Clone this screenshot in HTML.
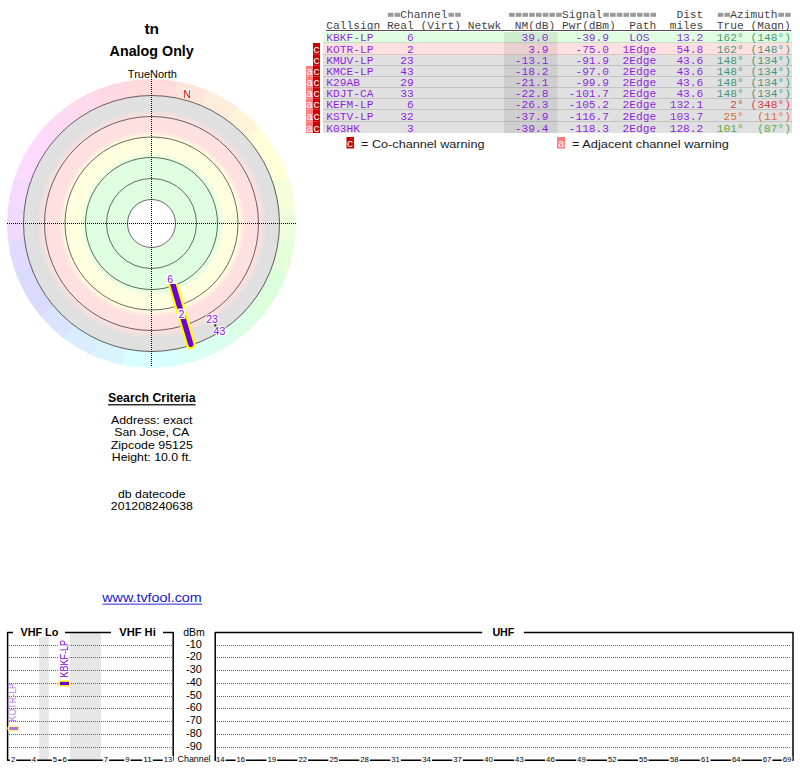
<!DOCTYPE html><html><head><meta charset="utf-8"><style>
html,body{margin:0;padding:0;background:#fff;}
body{width:800px;height:768px;position:relative;overflow:hidden;}
.abs{position:absolute;}
</style></head><body>
<div class="abs" style="left:7.0px;top:79.0px;width:289.0px;height:289.0px;border-radius:50%;background:conic-gradient(from 0deg at 50% 50%, #ffdada 0.00deg 10.25deg,#ffe4da 10.25deg 23.00deg,#ffecda 23.00deg 36.00deg,#fff4da 36.00deg 48.75deg,#ffffda 48.75deg 71.50deg,#f4ffda 71.50deg 84.25deg,#ecffda 84.25deg 97.25deg,#e4ffda 97.25deg 110.00deg,#daffda 110.00deg 130.25deg,#daffe4 130.25deg 143.00deg,#daffec 143.00deg 156.00deg,#dafff4 156.00deg 168.75deg,#daffff 168.75deg 191.50deg,#daf4ff 191.50deg 204.25deg,#daecff 204.25deg 217.25deg,#dae4ff 217.25deg 230.00deg,#dadaff 230.00deg 250.25deg,#e4daff 250.25deg 263.00deg,#ecdaff 263.00deg 276.00deg,#f4daff 276.00deg 288.75deg,#ffdaff 288.75deg 311.50deg,#ffdaf4 311.50deg 324.25deg,#ffdaec 324.25deg 337.25deg,#ffdae4 337.25deg 350.00deg,#ffdada 350.00deg 360.00deg);"></div>
<div class="abs" style="left:23.5px;top:95.5px;width:256px;height:256px;border-radius:50%;background:radial-gradient(circle 128px at 50% 50%, #fff 0px, #fff 24px, #e0ffe0 24px, #e0ffe0 66px, #ffffe0 72.5px, #ffffe0 86.5px, #ffe0e0 93px, #ffe0e0 107.5px, #e0e0e0 114.5px, #e0e0e0 128px);"></div>
<svg class="abs" style="left:0;top:0" width="800" height="768" viewBox="0 0 800 768">

<text x="151.7" y="34" text-anchor="middle" font-family='"Liberation Sans", sans-serif' font-size="15.5px" font-weight="bold" fill="#000" >tn</text>
<text x="151.7" y="55.5" text-anchor="middle" font-family='"Liberation Sans", sans-serif' font-size="14.3px" font-weight="bold" fill="#000" >Analog Only</text>
<text x="152.4" y="78" text-anchor="middle" font-family='"Liberation Sans", sans-serif' font-size="11px" fill="#000" >TrueNorth</text>
<circle cx="151.5" cy="223.5" r="24" fill="none" stroke="#000" stroke-opacity="0.58" stroke-width="1"/>
<circle cx="151.5" cy="223.5" r="45" fill="none" stroke="#000" stroke-opacity="0.58" stroke-width="1"/>
<circle cx="151.5" cy="223.5" r="66" fill="none" stroke="#000" stroke-opacity="0.58" stroke-width="1"/>
<circle cx="151.5" cy="223.5" r="86.5" fill="none" stroke="#000" stroke-opacity="0.58" stroke-width="1"/>
<circle cx="151.5" cy="223.5" r="107" fill="none" stroke="#000" stroke-opacity="0.58" stroke-width="1"/>
<circle cx="151.5" cy="223.5" r="128" fill="none" stroke="#000" stroke-opacity="0.58" stroke-width="1"/>
<line x1="7" y1="223.5" x2="296" y2="223.5" stroke="#000" stroke-width="1" stroke-dasharray="1 1"/>
<line x1="151.5" y1="79" x2="151.5" y2="366" stroke="#000" stroke-width="1" stroke-dasharray="1 1"/>
<rect x="183" y="89" width="8" height="9" fill="#fff"/>
<text x="187" y="98.3" text-anchor="middle" font-family='"Liberation Sans", sans-serif' font-size="10.5px" fill="#e00000" >N</text>
<clipPath id="barclip"><rect x="0" y="284" width="300" height="100"/></clipPath>
<g clip-path="url(#barclip)"><line x1="171.50" y1="279.50" x2="190.80" y2="344.30" stroke="#ffff00" stroke-width="10" stroke-linecap="round"/>
<line x1="171.50" y1="279.50" x2="190.80" y2="344.30" stroke="#7000d8" stroke-width="5.4" stroke-linecap="round"/></g>
<rect x="166" y="275" width="8.5" height="9" fill="#fff" fill-opacity="0.8"/>
<text x="170.2" y="283" text-anchor="middle" font-family='"Liberation Sans", sans-serif' font-size="10.5px" fill="#fff" stroke="#fff" stroke-opacity="0.85" stroke-width="2.2" stroke-linejoin="round">6</text>
<text x="170.2" y="283" text-anchor="middle" font-family='"Liberation Sans", sans-serif' font-size="10.5px" fill="#8a10e0">6</text>
<rect x="177.4" y="308.5" width="7.8" height="10.5" fill="#fff" fill-opacity="0.85"/>
<text x="181.4" y="317.7" text-anchor="middle" font-family='"Liberation Sans", sans-serif' font-size="10.5px" fill="#fff" stroke="#fff" stroke-opacity="0.85" stroke-width="2.2" stroke-linejoin="round">2</text>
<text x="181.4" y="317.7" text-anchor="middle" font-family='"Liberation Sans", sans-serif' font-size="10.5px" fill="#8a10e0">2</text>
<text x="212.1" y="323" text-anchor="middle" font-family='"Liberation Sans", sans-serif' font-size="10.5px" fill="#fff" stroke="#fff" stroke-opacity="0.85" stroke-width="2.2" stroke-linejoin="round">23</text>
<text x="212.1" y="323" text-anchor="middle" font-family='"Liberation Sans", sans-serif' font-size="10.5px" fill="#8a10e0">23</text>
<circle cx="215.3" cy="325.4" r="1.2" fill="#303030"/>
<text x="219.4" y="335.3" text-anchor="middle" font-family='"Liberation Sans", sans-serif' font-size="10.5px" fill="#fff" stroke="#fff" stroke-opacity="0.85" stroke-width="2.2" stroke-linejoin="round">43</text>
<text x="219.4" y="335.3" text-anchor="middle" font-family='"Liberation Sans", sans-serif' font-size="10.5px" fill="#8a10e0">43</text>
<text x="151.8" y="401.6" text-anchor="middle" font-family='"Liberation Sans", sans-serif' font-size="12.2px" font-weight="bold" fill="#000" textLength="87.5" lengthAdjust="spacingAndGlyphs" >Search Criteria</text>
<rect x="108" y="404.2" width="87.5" height="1.2" fill="#000"/>
<text x="151.8" y="423.7" text-anchor="middle" font-family='"Liberation Sans", sans-serif' font-size="11.8px" fill="#000" textLength="81.5" lengthAdjust="spacingAndGlyphs" >Address: exact</text>
<text x="151.8" y="436.4" text-anchor="middle" font-family='"Liberation Sans", sans-serif' font-size="11.8px" fill="#000" textLength="75" lengthAdjust="spacingAndGlyphs" >San Jose, CA</text>
<text x="151.8" y="448.6" text-anchor="middle" font-family='"Liberation Sans", sans-serif' font-size="11.8px" fill="#000" textLength="82" lengthAdjust="spacingAndGlyphs" >Zipcode 95125</text>
<text x="151.8" y="460.7" text-anchor="middle" font-family='"Liberation Sans", sans-serif' font-size="11.8px" fill="#000" textLength="80" lengthAdjust="spacingAndGlyphs" >Height: 10.0 ft.</text>
<text x="151.8" y="497.8" text-anchor="middle" font-family='"Liberation Sans", sans-serif' font-size="11.8px" fill="#000" textLength="67.5" lengthAdjust="spacingAndGlyphs" >db datecode</text>
<text x="151.8" y="509.5" text-anchor="middle" font-family='"Liberation Sans", sans-serif' font-size="11.8px" fill="#000" textLength="82" lengthAdjust="spacingAndGlyphs" >201208240638</text>
<text x="152" y="602" text-anchor="middle" font-family='"Liberation Sans", sans-serif' font-size="13.3px" fill="#2020c8" textLength="99.5" lengthAdjust="spacingAndGlyphs" >www.tvfool.com</text>
<rect x="102.5" y="603.6" width="99.5" height="1.1" fill="#3a3ad8"/>
<rect x="387.85" y="12.8" width="5.6" height="4" fill="#9a9a9a"/>
<rect x="394.58" y="12.8" width="5.6" height="4" fill="#9a9a9a"/>
<text x="400.36" y="18" font-family='"Liberation Mono", monospace' font-size="11.22px" fill="#1a1a1a" fill-opacity="0.88" xml:space="preserve" >Channel</text>
<rect x="448.44" y="12.8" width="5.6" height="4" fill="#9a9a9a"/>
<rect x="455.18" y="12.8" width="5.6" height="4" fill="#9a9a9a"/>
<rect x="509.04" y="12.8" width="5.6" height="4" fill="#9a9a9a"/>
<rect x="515.77" y="12.8" width="5.6" height="4" fill="#9a9a9a"/>
<rect x="522.51" y="12.8" width="5.6" height="4" fill="#9a9a9a"/>
<rect x="529.24" y="12.8" width="5.6" height="4" fill="#9a9a9a"/>
<rect x="535.97" y="12.8" width="5.6" height="4" fill="#9a9a9a"/>
<rect x="542.71" y="12.8" width="5.6" height="4" fill="#9a9a9a"/>
<rect x="549.44" y="12.8" width="5.6" height="4" fill="#9a9a9a"/>
<rect x="556.17" y="12.8" width="5.6" height="4" fill="#9a9a9a"/>
<text x="561.96" y="18" font-family='"Liberation Mono", monospace' font-size="11.22px" fill="#1a1a1a" fill-opacity="0.88" xml:space="preserve" >Signal</text>
<rect x="603.30" y="12.8" width="5.6" height="4" fill="#9a9a9a"/>
<rect x="610.04" y="12.8" width="5.6" height="4" fill="#9a9a9a"/>
<rect x="616.77" y="12.8" width="5.6" height="4" fill="#9a9a9a"/>
<rect x="623.50" y="12.8" width="5.6" height="4" fill="#9a9a9a"/>
<rect x="630.24" y="12.8" width="5.6" height="4" fill="#9a9a9a"/>
<rect x="636.97" y="12.8" width="5.6" height="4" fill="#9a9a9a"/>
<rect x="643.70" y="12.8" width="5.6" height="4" fill="#9a9a9a"/>
<rect x="650.43" y="12.8" width="5.6" height="4" fill="#9a9a9a"/>
<text x="676.42" y="18" font-family='"Liberation Mono", monospace' font-size="11.22px" fill="#1a1a1a" fill-opacity="0.88" xml:space="preserve" >Dist</text>
<rect x="717.76" y="12.8" width="5.6" height="4" fill="#9a9a9a"/>
<rect x="724.50" y="12.8" width="5.6" height="4" fill="#9a9a9a"/>
<text x="730.28" y="18" font-family='"Liberation Mono", monospace' font-size="11.22px" fill="#1a1a1a" fill-opacity="0.88" xml:space="preserve" >Azimuth</text>
<rect x="778.36" y="12.8" width="5.6" height="4" fill="#9a9a9a"/>
<rect x="785.09" y="12.8" width="5.6" height="4" fill="#9a9a9a"/>
<text x="326.30" y="29" font-family='"Liberation Mono", monospace' font-size="11.22px" fill="#1a1a1a" fill-opacity="0.88" xml:space="preserve" >Callsign Real (Virt) Netwk  NM(dB) Pwr(dBm)  Path  miles  True (Magn)</text>
<rect x="326" y="30" width="465" height="1" fill="#505050"/>
<rect x="323" y="32" width="469" height="11" fill="#e0ffe0"/>
<rect x="504" y="32" width="53.5" height="11" fill="#000" fill-opacity="0.075"/>
<rect x="323" y="42" width="469" height="1" fill="#000" fill-opacity="0.12"/>
<text x="326.30" y="41" font-family='"Liberation Mono", monospace' font-size="11.22px" fill="#8000e0" fill-opacity="0.88" xml:space="preserve" >KBKF-LP     6                39.0    -39.9   LOS    13.2</text>
<text x="703.35" y="41" font-family='"Liberation Mono", monospace' font-size="11.22px" fill="#1e8a6a" fill-opacity="0.88" xml:space="preserve" >  162° (148°)</text>
<rect x="323" y="43" width="469" height="12" fill="#ffe0e0"/>
<rect x="504" y="43" width="53.5" height="12" fill="#000" fill-opacity="0.075"/>
<rect x="323" y="54" width="469" height="1" fill="#000" fill-opacity="0.12"/>
<text x="326.30" y="53" font-family='"Liberation Mono", monospace' font-size="11.22px" fill="#8000e0" fill-opacity="0.88" xml:space="preserve" >KOTR-LP     2                 3.9    -75.0  1Edge   54.8</text>
<text x="703.35" y="53" font-family='"Liberation Mono", monospace' font-size="11.22px" fill="#1e8a6a" fill-opacity="0.88" xml:space="preserve" >  162° (148°)</text>
<rect x="313" y="43" width="7" height="12" fill="#cc0000"/>
<text x="316.5" y="53" text-anchor="middle" font-family='"Liberation Mono", monospace' font-size="11.22px" fill="#fff">c</text>
<rect x="313" y="54" width="7" height="1" fill="#fff" fill-opacity="0.18"/>
<rect x="323" y="55" width="469" height="11" fill="#e0e0e0"/>
<rect x="504" y="55" width="53.5" height="11" fill="#000" fill-opacity="0.075"/>
<rect x="323" y="65" width="469" height="1" fill="#000" fill-opacity="0.12"/>
<text x="326.30" y="64" font-family='"Liberation Mono", monospace' font-size="11.22px" fill="#8000e0" fill-opacity="0.88" xml:space="preserve" >KMUV-LP    23               -13.1    -91.9  2Edge   43.6</text>
<text x="703.35" y="64" font-family='"Liberation Mono", monospace' font-size="11.22px" fill="#1e8a6a" fill-opacity="0.88" xml:space="preserve" >  148° (134°)</text>
<rect x="313" y="55" width="7" height="11" fill="#cc0000"/>
<text x="316.5" y="64" text-anchor="middle" font-family='"Liberation Mono", monospace' font-size="11.22px" fill="#fff">c</text>
<rect x="313" y="65" width="7" height="1" fill="#fff" fill-opacity="0.18"/>
<rect x="323" y="66" width="469" height="11" fill="#e0e0e0"/>
<rect x="504" y="66" width="53.5" height="11" fill="#000" fill-opacity="0.075"/>
<rect x="323" y="76" width="469" height="1" fill="#000" fill-opacity="0.12"/>
<text x="326.30" y="75" font-family='"Liberation Mono", monospace' font-size="11.22px" fill="#8000e0" fill-opacity="0.88" xml:space="preserve" >KMCE-LP    43               -18.2    -97.0  2Edge   43.6</text>
<text x="703.35" y="75" font-family='"Liberation Mono", monospace' font-size="11.22px" fill="#1e8a6a" fill-opacity="0.88" xml:space="preserve" >  148° (134°)</text>
<rect x="313" y="66" width="7" height="11" fill="#cc0000"/>
<text x="316.5" y="75" text-anchor="middle" font-family='"Liberation Mono", monospace' font-size="11.22px" fill="#fff">c</text>
<rect x="306" y="66" width="7" height="11" fill="#ff7d7d"/>
<text x="309.5" y="75" text-anchor="middle" font-family='"Liberation Mono", monospace' font-size="11.22px" fill="#fff">a</text>
<rect x="306" y="76" width="14" height="1" fill="#fff" fill-opacity="0.18"/>
<rect x="323" y="77" width="469" height="11" fill="#e0e0e0"/>
<rect x="504" y="77" width="53.5" height="11" fill="#000" fill-opacity="0.075"/>
<rect x="323" y="87" width="469" height="1" fill="#000" fill-opacity="0.12"/>
<text x="326.30" y="86" font-family='"Liberation Mono", monospace' font-size="11.22px" fill="#8000e0" fill-opacity="0.88" xml:space="preserve" >K29AB      29               -21.1    -99.9  2Edge   43.6</text>
<text x="703.35" y="86" font-family='"Liberation Mono", monospace' font-size="11.22px" fill="#1e8a6a" fill-opacity="0.88" xml:space="preserve" >  148° (134°)</text>
<rect x="313" y="77" width="7" height="11" fill="#cc0000"/>
<text x="316.5" y="86" text-anchor="middle" font-family='"Liberation Mono", monospace' font-size="11.22px" fill="#fff">c</text>
<rect x="306" y="77" width="7" height="11" fill="#ff7d7d"/>
<text x="309.5" y="86" text-anchor="middle" font-family='"Liberation Mono", monospace' font-size="11.22px" fill="#fff">a</text>
<rect x="306" y="87" width="14" height="1" fill="#fff" fill-opacity="0.18"/>
<rect x="323" y="88" width="469" height="11" fill="#e0e0e0"/>
<rect x="504" y="88" width="53.5" height="11" fill="#000" fill-opacity="0.075"/>
<rect x="323" y="98" width="469" height="1" fill="#000" fill-opacity="0.12"/>
<text x="326.30" y="97" font-family='"Liberation Mono", monospace' font-size="11.22px" fill="#8000e0" fill-opacity="0.88" xml:space="preserve" >KDJT-CA    33               -22.8   -101.7  2Edge   43.6</text>
<text x="703.35" y="97" font-family='"Liberation Mono", monospace' font-size="11.22px" fill="#1e8a6a" fill-opacity="0.88" xml:space="preserve" >  148° (134°)</text>
<rect x="313" y="88" width="7" height="11" fill="#cc0000"/>
<text x="316.5" y="97" text-anchor="middle" font-family='"Liberation Mono", monospace' font-size="11.22px" fill="#fff">c</text>
<rect x="306" y="88" width="7" height="11" fill="#ff7d7d"/>
<text x="309.5" y="97" text-anchor="middle" font-family='"Liberation Mono", monospace' font-size="11.22px" fill="#fff">a</text>
<rect x="306" y="98" width="14" height="1" fill="#fff" fill-opacity="0.18"/>
<rect x="323" y="99" width="469" height="11" fill="#e0e0e0"/>
<rect x="504" y="99" width="53.5" height="11" fill="#000" fill-opacity="0.075"/>
<rect x="323" y="109" width="469" height="1" fill="#000" fill-opacity="0.12"/>
<text x="326.30" y="108" font-family='"Liberation Mono", monospace' font-size="11.22px" fill="#8000e0" fill-opacity="0.88" xml:space="preserve" >KEFM-LP     6               -26.3   -105.2  2Edge  132.1</text>
<text x="703.35" y="108" font-family='"Liberation Mono", monospace' font-size="11.22px" fill="#d41c1c" fill-opacity="0.88" xml:space="preserve" >    2° (348°)</text>
<rect x="313" y="99" width="7" height="11" fill="#cc0000"/>
<text x="316.5" y="108" text-anchor="middle" font-family='"Liberation Mono", monospace' font-size="11.22px" fill="#fff">c</text>
<rect x="306" y="99" width="7" height="11" fill="#ff7d7d"/>
<text x="309.5" y="108" text-anchor="middle" font-family='"Liberation Mono", monospace' font-size="11.22px" fill="#fff">a</text>
<rect x="306" y="109" width="14" height="1" fill="#fff" fill-opacity="0.18"/>
<rect x="323" y="110" width="469" height="12" fill="#e0e0e0"/>
<rect x="504" y="110" width="53.5" height="12" fill="#000" fill-opacity="0.075"/>
<rect x="323" y="121" width="469" height="1" fill="#000" fill-opacity="0.12"/>
<text x="326.30" y="120" font-family='"Liberation Mono", monospace' font-size="11.22px" fill="#8000e0" fill-opacity="0.88" xml:space="preserve" >KSTV-LP    32               -37.9   -116.7  2Edge  103.7</text>
<text x="703.35" y="120" font-family='"Liberation Mono", monospace' font-size="11.22px" fill="#d85a22" fill-opacity="0.88" xml:space="preserve" >   25°  (11°)</text>
<rect x="313" y="110" width="7" height="12" fill="#cc0000"/>
<text x="316.5" y="120" text-anchor="middle" font-family='"Liberation Mono", monospace' font-size="11.22px" fill="#fff">c</text>
<rect x="306" y="110" width="7" height="12" fill="#ff7d7d"/>
<text x="309.5" y="120" text-anchor="middle" font-family='"Liberation Mono", monospace' font-size="11.22px" fill="#fff">a</text>
<rect x="306" y="121" width="14" height="1" fill="#fff" fill-opacity="0.18"/>
<rect x="323" y="122" width="469" height="11" fill="#e0e0e0"/>
<rect x="504" y="122" width="53.5" height="11" fill="#000" fill-opacity="0.075"/>
<text x="326.30" y="132" font-family='"Liberation Mono", monospace' font-size="11.22px" fill="#8000e0" fill-opacity="0.88" xml:space="preserve" >K03HK       3               -39.4   -118.3  2Edge  128.2</text>
<text x="703.35" y="132" font-family='"Liberation Mono", monospace' font-size="11.22px" fill="#48a020" fill-opacity="0.88" xml:space="preserve" >  101°  (87°)</text>
<rect x="313" y="122" width="7" height="11" fill="#cc0000"/>
<text x="316.5" y="132" text-anchor="middle" font-family='"Liberation Mono", monospace' font-size="11.22px" fill="#fff">c</text>
<rect x="306" y="122" width="7" height="11" fill="#ff7d7d"/>
<text x="309.5" y="132" text-anchor="middle" font-family='"Liberation Mono", monospace' font-size="11.22px" fill="#fff">a</text>
<rect x="346.5" y="137" width="7.5" height="11.5" fill="#cc0000"/>
<text x="350.2" y="147" text-anchor="middle" font-family='"Liberation Mono", monospace' font-size="11.22px" fill="#fff">c</text>
<text x="361" y="148" text-anchor="start" font-family='"Liberation Sans", sans-serif' font-size="11.8px" fill="#1a1a1a" textLength="123.5" lengthAdjust="spacingAndGlyphs" >= Co-channel warning</text>
<rect x="557" y="137" width="8" height="11.5" fill="#ff7d7d"/>
<text x="561" y="147" text-anchor="middle" font-family='"Liberation Mono", monospace' font-size="11.22px" fill="#fff">a</text>
<text x="572" y="148" text-anchor="start" font-family='"Liberation Sans", sans-serif' font-size="11.8px" fill="#1a1a1a" textLength="157" lengthAdjust="spacingAndGlyphs" >= Adjacent channel warning</text>
<rect x="39.2" y="633" width="9.6" height="127" fill="#e6e6e6"/>
<rect x="70" y="633" width="31" height="127" fill="#e6e6e6"/>
<line x1="9" y1="645.5" x2="172" y2="645.5" stroke="#666" stroke-width="1" stroke-dasharray="1 1"/>
<line x1="217" y1="645.5" x2="791" y2="645.5" stroke="#666" stroke-width="1" stroke-dasharray="1 1"/>
<text x="194" y="647.7" text-anchor="middle" font-family='"Liberation Sans", sans-serif' font-size="10.6px" fill="#000" textLength="15.8" lengthAdjust="spacingAndGlyphs" >-10</text>
<line x1="9" y1="657.5" x2="172" y2="657.5" stroke="#666" stroke-width="1" stroke-dasharray="1 1"/>
<line x1="217" y1="657.5" x2="791" y2="657.5" stroke="#666" stroke-width="1" stroke-dasharray="1 1"/>
<text x="194" y="659.7" text-anchor="middle" font-family='"Liberation Sans", sans-serif' font-size="10.6px" fill="#000" textLength="15.8" lengthAdjust="spacingAndGlyphs" >-20</text>
<line x1="9" y1="670.5" x2="172" y2="670.5" stroke="#666" stroke-width="1" stroke-dasharray="1 1"/>
<line x1="217" y1="670.5" x2="791" y2="670.5" stroke="#666" stroke-width="1" stroke-dasharray="1 1"/>
<text x="194" y="672.7" text-anchor="middle" font-family='"Liberation Sans", sans-serif' font-size="10.6px" fill="#000" textLength="15.8" lengthAdjust="spacingAndGlyphs" >-30</text>
<line x1="9" y1="683.5" x2="172" y2="683.5" stroke="#666" stroke-width="1" stroke-dasharray="1 1"/>
<line x1="217" y1="683.5" x2="791" y2="683.5" stroke="#666" stroke-width="1" stroke-dasharray="1 1"/>
<text x="194" y="685.7" text-anchor="middle" font-family='"Liberation Sans", sans-serif' font-size="10.6px" fill="#000" textLength="15.8" lengthAdjust="spacingAndGlyphs" >-40</text>
<line x1="9" y1="696.5" x2="172" y2="696.5" stroke="#666" stroke-width="1" stroke-dasharray="1 1"/>
<line x1="217" y1="696.5" x2="791" y2="696.5" stroke="#666" stroke-width="1" stroke-dasharray="1 1"/>
<text x="194" y="698.7" text-anchor="middle" font-family='"Liberation Sans", sans-serif' font-size="10.6px" fill="#000" textLength="15.8" lengthAdjust="spacingAndGlyphs" >-50</text>
<line x1="9" y1="708.5" x2="172" y2="708.5" stroke="#666" stroke-width="1" stroke-dasharray="1 1"/>
<line x1="217" y1="708.5" x2="791" y2="708.5" stroke="#666" stroke-width="1" stroke-dasharray="1 1"/>
<text x="194" y="710.7" text-anchor="middle" font-family='"Liberation Sans", sans-serif' font-size="10.6px" fill="#000" textLength="15.8" lengthAdjust="spacingAndGlyphs" >-60</text>
<line x1="9" y1="721.5" x2="172" y2="721.5" stroke="#666" stroke-width="1" stroke-dasharray="1 1"/>
<line x1="217" y1="721.5" x2="791" y2="721.5" stroke="#666" stroke-width="1" stroke-dasharray="1 1"/>
<text x="194" y="723.7" text-anchor="middle" font-family='"Liberation Sans", sans-serif' font-size="10.6px" fill="#000" textLength="15.8" lengthAdjust="spacingAndGlyphs" >-70</text>
<line x1="9" y1="734.5" x2="172" y2="734.5" stroke="#666" stroke-width="1" stroke-dasharray="1 1"/>
<line x1="217" y1="734.5" x2="791" y2="734.5" stroke="#666" stroke-width="1" stroke-dasharray="1 1"/>
<text x="194" y="736.7" text-anchor="middle" font-family='"Liberation Sans", sans-serif' font-size="10.6px" fill="#000" textLength="15.8" lengthAdjust="spacingAndGlyphs" >-80</text>
<line x1="9" y1="747.5" x2="172" y2="747.5" stroke="#666" stroke-width="1" stroke-dasharray="1 1"/>
<line x1="217" y1="747.5" x2="791" y2="747.5" stroke="#666" stroke-width="1" stroke-dasharray="1 1"/>
<text x="194" y="749.7" text-anchor="middle" font-family='"Liberation Sans", sans-serif' font-size="10.6px" fill="#000" textLength="15.8" lengthAdjust="spacingAndGlyphs" >-90</text>
<text x="194" y="635.8" text-anchor="middle" font-family='"Liberation Sans", sans-serif' font-size="10.4px" fill="#000" textLength="21.6" lengthAdjust="spacingAndGlyphs" >dBm</text>
<text x="194.1" y="762" text-anchor="middle" font-family='"Liberation Sans", sans-serif' font-size="9.2px" fill="#000" textLength="33" lengthAdjust="spacingAndGlyphs" >Channel</text>
<rect x="13" y="625" width="52" height="12" fill="#fff"/>
<path d="M13 632.5 H7.6 V760.2 H173.2 V632.5 H163" fill="none" stroke="#000" stroke-width="1.5" stroke-linejoin="round"/>
<path d="M65 632.5 H111" fill="none" stroke="#000" stroke-width="1.5"/>
<path d="M482.2 632.4 H215.2 V760.2 H793 V632.4 H523.8" fill="none" stroke="#000" stroke-width="1.5" stroke-linejoin="round"/>
<text x="39.4" y="636" text-anchor="middle" font-family='"Liberation Sans", sans-serif' font-size="11px" font-weight="bold" fill="#000" textLength="38" lengthAdjust="spacingAndGlyphs" >VHF Lo</text>
<text x="137.5" y="636" text-anchor="middle" font-family='"Liberation Sans", sans-serif' font-size="11px" font-weight="bold" fill="#000" textLength="36.5" lengthAdjust="spacingAndGlyphs" >VHF Hi</text>
<text x="503.4" y="636" text-anchor="middle" font-family='"Liberation Sans", sans-serif' font-size="11px" font-weight="bold" fill="#000" textLength="22" lengthAdjust="spacingAndGlyphs" >UHF</text>
<rect x="10.0" y="756" width="6.3" height="8" fill="#fff"/>
<text x="13.2" y="762" text-anchor="middle" font-family='"Liberation Sans", sans-serif' font-size="7.2px" fill="#000" textLength="4.3" lengthAdjust="spacingAndGlyphs" >2</text>
<rect x="30.9" y="756" width="6.3" height="8" fill="#fff"/>
<text x="34" y="762" text-anchor="middle" font-family='"Liberation Sans", sans-serif' font-size="7.2px" fill="#000" textLength="4.3" lengthAdjust="spacingAndGlyphs" >4</text>
<rect x="51.9" y="756" width="6.3" height="8" fill="#fff"/>
<text x="55" y="762" text-anchor="middle" font-family='"Liberation Sans", sans-serif' font-size="7.2px" fill="#000" textLength="4.3" lengthAdjust="spacingAndGlyphs" >5</text>
<rect x="61.6" y="756" width="6.3" height="8" fill="#fff"/>
<text x="64.7" y="762" text-anchor="middle" font-family='"Liberation Sans", sans-serif' font-size="7.2px" fill="#000" textLength="4.3" lengthAdjust="spacingAndGlyphs" >6</text>
<rect x="102.8" y="756" width="6.3" height="8" fill="#fff"/>
<text x="106" y="762" text-anchor="middle" font-family='"Liberation Sans", sans-serif' font-size="7.2px" fill="#000" textLength="4.3" lengthAdjust="spacingAndGlyphs" >7</text>
<rect x="124.3" y="756" width="6.3" height="8" fill="#fff"/>
<text x="127.5" y="762" text-anchor="middle" font-family='"Liberation Sans", sans-serif' font-size="7.2px" fill="#000" textLength="4.3" lengthAdjust="spacingAndGlyphs" >9</text>
<rect x="142.2" y="756" width="10.6" height="8" fill="#fff"/>
<text x="147.5" y="762" text-anchor="middle" font-family='"Liberation Sans", sans-serif' font-size="7.2px" fill="#000" textLength="8.6" lengthAdjust="spacingAndGlyphs" >11</text>
<rect x="162.7" y="756" width="10.6" height="8" fill="#fff"/>
<text x="168" y="762" text-anchor="middle" font-family='"Liberation Sans", sans-serif' font-size="7.2px" fill="#000" textLength="8.6" lengthAdjust="spacingAndGlyphs" >13</text>
<rect x="216.2" y="756" width="9.3" height="8" fill="#fff"/>
<text x="220.2" y="762" text-anchor="middle" font-family='"Liberation Sans", sans-serif' font-size="7.2px" fill="#000" textLength="8.6" lengthAdjust="spacingAndGlyphs" >14</text>
<rect x="235.5" y="756" width="10.6" height="8" fill="#fff"/>
<text x="240.8" y="762" text-anchor="middle" font-family='"Liberation Sans", sans-serif' font-size="7.2px" fill="#000" textLength="8.6" lengthAdjust="spacingAndGlyphs" >16</text>
<rect x="266.5" y="756" width="10.6" height="8" fill="#fff"/>
<text x="271.8" y="762" text-anchor="middle" font-family='"Liberation Sans", sans-serif' font-size="7.2px" fill="#000" textLength="8.6" lengthAdjust="spacingAndGlyphs" >19</text>
<rect x="297.4" y="756" width="10.6" height="8" fill="#fff"/>
<text x="302.7" y="762" text-anchor="middle" font-family='"Liberation Sans", sans-serif' font-size="7.2px" fill="#000" textLength="8.6" lengthAdjust="spacingAndGlyphs" >22</text>
<rect x="328.4" y="756" width="10.6" height="8" fill="#fff"/>
<text x="333.7" y="762" text-anchor="middle" font-family='"Liberation Sans", sans-serif' font-size="7.2px" fill="#000" textLength="8.6" lengthAdjust="spacingAndGlyphs" >25</text>
<rect x="359.3" y="756" width="10.6" height="8" fill="#fff"/>
<text x="364.6" y="762" text-anchor="middle" font-family='"Liberation Sans", sans-serif' font-size="7.2px" fill="#000" textLength="8.6" lengthAdjust="spacingAndGlyphs" >28</text>
<rect x="390.3" y="756" width="10.6" height="8" fill="#fff"/>
<text x="395.6" y="762" text-anchor="middle" font-family='"Liberation Sans", sans-serif' font-size="7.2px" fill="#000" textLength="8.6" lengthAdjust="spacingAndGlyphs" >31</text>
<rect x="421.3" y="756" width="10.6" height="8" fill="#fff"/>
<text x="426.6" y="762" text-anchor="middle" font-family='"Liberation Sans", sans-serif' font-size="7.2px" fill="#000" textLength="8.6" lengthAdjust="spacingAndGlyphs" >34</text>
<rect x="452.2" y="756" width="10.6" height="8" fill="#fff"/>
<text x="457.5" y="762" text-anchor="middle" font-family='"Liberation Sans", sans-serif' font-size="7.2px" fill="#000" textLength="8.6" lengthAdjust="spacingAndGlyphs" >37</text>
<rect x="483.2" y="756" width="10.6" height="8" fill="#fff"/>
<text x="488.5" y="762" text-anchor="middle" font-family='"Liberation Sans", sans-serif' font-size="7.2px" fill="#000" textLength="8.6" lengthAdjust="spacingAndGlyphs" >40</text>
<rect x="514.1" y="756" width="10.6" height="8" fill="#fff"/>
<text x="519.4" y="762" text-anchor="middle" font-family='"Liberation Sans", sans-serif' font-size="7.2px" fill="#000" textLength="8.6" lengthAdjust="spacingAndGlyphs" >43</text>
<rect x="545.1" y="756" width="10.6" height="8" fill="#fff"/>
<text x="550.4" y="762" text-anchor="middle" font-family='"Liberation Sans", sans-serif' font-size="7.2px" fill="#000" textLength="8.6" lengthAdjust="spacingAndGlyphs" >46</text>
<rect x="576.1" y="756" width="10.6" height="8" fill="#fff"/>
<text x="581.4" y="762" text-anchor="middle" font-family='"Liberation Sans", sans-serif' font-size="7.2px" fill="#000" textLength="8.6" lengthAdjust="spacingAndGlyphs" >49</text>
<rect x="607.0" y="756" width="10.6" height="8" fill="#fff"/>
<text x="612.3" y="762" text-anchor="middle" font-family='"Liberation Sans", sans-serif' font-size="7.2px" fill="#000" textLength="8.6" lengthAdjust="spacingAndGlyphs" >52</text>
<rect x="638.0" y="756" width="10.6" height="8" fill="#fff"/>
<text x="643.3" y="762" text-anchor="middle" font-family='"Liberation Sans", sans-serif' font-size="7.2px" fill="#000" textLength="8.6" lengthAdjust="spacingAndGlyphs" >55</text>
<rect x="668.9" y="756" width="10.6" height="8" fill="#fff"/>
<text x="674.2" y="762" text-anchor="middle" font-family='"Liberation Sans", sans-serif' font-size="7.2px" fill="#000" textLength="8.6" lengthAdjust="spacingAndGlyphs" >58</text>
<rect x="699.9" y="756" width="10.6" height="8" fill="#fff"/>
<text x="705.2" y="762" text-anchor="middle" font-family='"Liberation Sans", sans-serif' font-size="7.2px" fill="#000" textLength="8.6" lengthAdjust="spacingAndGlyphs" >61</text>
<rect x="730.9" y="756" width="10.6" height="8" fill="#fff"/>
<text x="736.2" y="762" text-anchor="middle" font-family='"Liberation Sans", sans-serif' font-size="7.2px" fill="#000" textLength="8.6" lengthAdjust="spacingAndGlyphs" >64</text>
<rect x="761.8" y="756" width="10.6" height="8" fill="#fff"/>
<text x="767.1" y="762" text-anchor="middle" font-family='"Liberation Sans", sans-serif' font-size="7.2px" fill="#000" textLength="8.6" lengthAdjust="spacingAndGlyphs" >67</text>
<rect x="781.7" y="756" width="10.6" height="8" fill="#fff"/>
<text x="787" y="762" text-anchor="middle" font-family='"Liberation Sans", sans-serif' font-size="7.2px" fill="#000" textLength="8.6" lengthAdjust="spacingAndGlyphs" >69</text>
<text transform="translate(68.3,677.5) rotate(-90)" font-family='"Liberation Sans", sans-serif' font-size="10px" fill="#fff" stroke="#fff" stroke-width="2" textLength="37.5" lengthAdjust="spacingAndGlyphs">KBKF-LP</text>
<text transform="translate(68.3,677.5) rotate(-90)" font-family='"Liberation Sans", sans-serif' font-size="10px" fill="#8000e0" textLength="37.5" lengthAdjust="spacingAndGlyphs">KBKF-LP</text>
<text transform="translate(16.2,721.5) rotate(-90)" font-family='"Liberation Sans", sans-serif' font-size="10px" fill="#b878e8" textLength="38.5" lengthAdjust="spacingAndGlyphs">KOTR-LP</text>
<rect x="7.3999999999999995" y="725.4" width="12.6" height="6.2" rx="3.1" fill="#ffff90"/>
<rect x="9.2" y="726.9" width="9" height="3.2" fill="#b070e8"/>
<rect x="58.2" y="680.4" width="12.6" height="6.2" rx="3.1" fill="#ffff00"/>
<rect x="60.0" y="681.9" width="9" height="3.2" fill="#7000d8"/>
</svg></body></html>
